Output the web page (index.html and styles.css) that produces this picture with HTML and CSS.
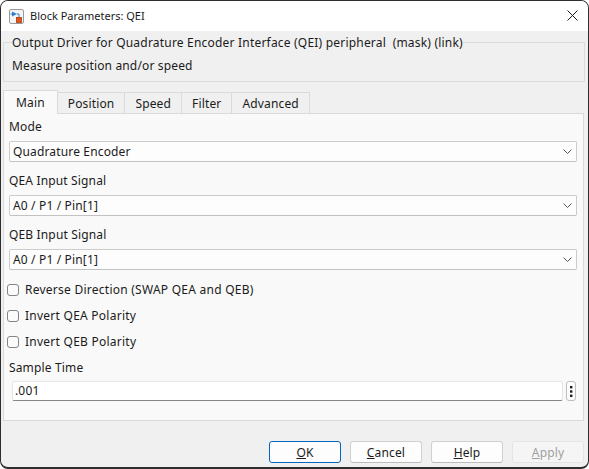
FILE: index.html
```html
<!DOCTYPE html>
<html lang="en">
<head>
    <meta charset="UTF-8">
    <title>Block Parameters: QEI</title>
    <link rel="stylesheet" href="styles.css">
</head>
<body>
    <div class="window">
        <div class="titlebar">
            <svg class="app-icon" width="15" height="15" viewBox="0 0 15 15">
                <rect x="0.5" y="0.5" width="14" height="14" rx="1.5" fill="#f4f4f4" stroke="#9a9a9a"/>
                <path d="M3 2.5 L8 5 L3 7.5 Z" fill="#2b7fd1"/>
                <path d="M1.5 5 H3 M8 5 H10 V9" stroke="#2b7fd1" fill="none"/>
                <rect x="7.5" y="8.5" width="5" height="5" fill="#e5531a" stroke="#a83a10" stroke-width="0.8"/>
            </svg>
            <span class="title">Block Parameters: QEI</span>
            <svg class="close" width="11" height="11" viewBox="0 0 11 11">
                <path d="M0.5 0.5 L10.5 10.5 M10.5 0.5 L0.5 10.5" stroke="#1a1a1a" stroke-width="1"/>
            </svg>
        </div>

        <div class="content">
            <fieldset class="mask">
                <legend>Output Driver for Quadrature Encoder Interface (QEI) peripheral&nbsp; (mask) (link)</legend>
                <p>Measure position and/or speed</p>
            </fieldset>

            <div class="tabs">
                <div class="tab active">Main</div>
                <div class="tab">Position</div>
                <div class="tab">Speed</div>
                <div class="tab">Filter</div>
                <div class="tab">Advanced</div>
            </div>

            <div class="panel">
                <label class="field-label first">Mode</label>
                <div class="select">
                    <span>Quadrature Encoder</span>
                    <svg width="9" height="5" viewBox="0 0 9 5"><path d="M0.5 0.5 L4.5 4.5 L8.5 0.5" stroke="#555" fill="none"/></svg>
                </div>

                <label class="field-label">QEA Input Signal</label>
                <div class="select">
                    <span>A0 / P1 / Pin[1]</span>
                    <svg width="9" height="5" viewBox="0 0 9 5"><path d="M0.5 0.5 L4.5 4.5 L8.5 0.5" stroke="#555" fill="none"/></svg>
                </div>

                <label class="field-label">QEB Input Signal</label>
                <div class="select">
                    <span>A0 / P1 / Pin[1]</span>
                    <svg width="9" height="5" viewBox="0 0 9 5"><path d="M0.5 0.5 L4.5 4.5 L8.5 0.5" stroke="#555" fill="none"/></svg>
                </div>

                <div class="checks">
                    <label class="check"><span class="box"></span>Reverse Direction (SWAP QEA and QEB)</label>
                    <label class="check"><span class="box"></span>Invert QEA Polarity</label>
                    <label class="check"><span class="box"></span>Invert QEB Polarity</label>
                </div>

                <label class="field-label sample">Sample Time</label>
                <div class="input-row">
                    <div class="text-input">.001</div>
                    <div class="more">
                        <svg width="3" height="11" viewBox="0 0 3 11">
                            <rect x="0" y="0" width="2.4" height="2.4" fill="#1a1a1a"/>
                            <rect x="0" y="4.3" width="2.4" height="2.4" fill="#1a1a1a"/>
                            <rect x="0" y="8.6" width="2.4" height="2.4" fill="#1a1a1a"/>
                        </svg>
                    </div>
                </div>
            </div>

            <div class="buttons">
                <button class="btn default"><u>O</u>K</button>
                <button class="btn"><u>C</u>ancel</button>
                <button class="btn"><u>H</u>elp</button>
                <button class="btn disabled"><u>A</u>pply</button>
            </div>
        </div>
    </div>
</body>
</html>
```

FILE: styles.css
```css
body {
    margin: 0;
    font-family: 'Noto Sans', 'DejaVu Sans', sans-serif;
    font-size: 12px;
    letter-spacing: 0.15px;
    color: #1b1b1b;
    background: #ffffff;
}

.window {
    width: 589px;
    height: 469px;
    box-sizing: border-box;
    border: 1px solid #2e2e2e;
    border-bottom-width: 2px;
    border-radius: 8px;
    overflow: hidden;
    background-color: #f0f0f0;
    display: flex;
    flex-direction: column;
}

.titlebar {
    height: 30px;
    flex-shrink: 0;
    background-color: #ffffff;
    display: flex;
    align-items: center;
    padding-left: 8px;
}

.app-icon {
    margin-right: 6px;
}

.title {
    flex: 1;
    font-size: 11px;
    letter-spacing: 0;
    line-height: 16px;
}

.close {
    margin-right: 10px;
    margin-top: -1px;
}

.content {
    padding: 2px 3px 0 2px;
}

.mask {
    margin: 0;
    padding: 0 8px 7px 8px;
    border: 1px solid #dcdcdc;
    min-width: 0;
}

.mask legend {
    padding: 2px 0 0 0;
    line-height: 16px;
    letter-spacing: 0.2px;
}

.mask p {
    margin: 7px 0 0 0;
    line-height: 16px;
}

.tabs {
    display: flex;
    align-items: flex-end;
    margin-top: 8px;
    height: 23px;
    position: relative;
    z-index: 1;
}

.tab {
    height: 21px;
    box-sizing: border-box;
    padding: 0 10px;
    border: 1px solid #dadada;
    border-left: none;
    border-bottom: none;
    background-color: #f0f0f0;
    line-height: 21px;
}

.tab.active {
    height: 24px;
    margin-bottom: -1px;
    padding: 0 12px;
    border-left: 1px solid #dadada;
    background-color: #f9f9f9;
    line-height: 23px;
}

.panel {
    height: 308px;
    box-sizing: border-box;
    background-color: #f9f9f9;
    border: 1px solid #dadada;
    margin-right: 1px;
    padding: 5px 6px 0 5px;
    display: flex;
    flex-direction: column;
}

.field-label {
    line-height: 16px;
    margin-top: 11px;
}

.field-label.first {
    margin-top: 0;
}

.select {
    margin-top: 6px;
    height: 21px;
    box-sizing: border-box;
    border: 1px solid #cccccc;
    border-bottom-color: #c2c2c2;
    border-radius: 2px;
    background-color: #fdfdfd;
    display: flex;
    align-items: center;
    justify-content: space-between;
    padding: 0 4px 0 3px;
}

.checks {
    margin-top: 6px;
    margin-left: -2px;
    letter-spacing: 0.25px;
}

.check {
    height: 26px;
    display: flex;
    align-items: center;
}

.box {
    width: 12px;
    height: 12px;
    box-sizing: border-box;
    border: 1px solid #858585;
    border-radius: 3px;
    background-color: #fbfbfb;
    margin-right: 6px;
    margin-top: 1px;
}

.field-label.sample {
    margin-top: 6px;
}

.input-row {
    margin-top: 5px;
    display: flex;
    padding-left: 3px;
}

.text-input {
    width: 551px;
    height: 20px;
    box-sizing: border-box;
    background-color: #ffffff;
    border: 1px solid #e6e6e6;
    border-bottom-color: #868686;
    border-radius: 2px;
    padding-left: 2px;
    line-height: 18px;
}

.more {
    margin-left: 3px;
    width: 10px;
    height: 20px;
    box-sizing: border-box;
    border: 1px solid #bdbdbd;
    border-radius: 3px;
    background-color: #fdfdfd;
    display: flex;
    align-items: center;
    justify-content: center;
}

.buttons {
    display: flex;
    justify-content: flex-end;
    gap: 9px;
    margin-top: 20px;
    padding-right: 1px;
}

.btn {
    width: 72px;
    height: 22px;
    box-sizing: border-box;
    font-family: inherit;
    font-size: 12px;
    letter-spacing: 0.15px;
    color: #1b1b1b;
    background-color: #fdfdfd;
    border: 1px solid #d0d0d0;
    border-bottom-color: #bcbcbc;
    border-radius: 3px;
    padding: 0;
}

.btn.default {
    border: 1px solid #0067c0;
}

.btn.disabled {
    color: #a0a0a0;
    background-color: #f5f5f5;
    border-color: #e5e5e5;
}
```
